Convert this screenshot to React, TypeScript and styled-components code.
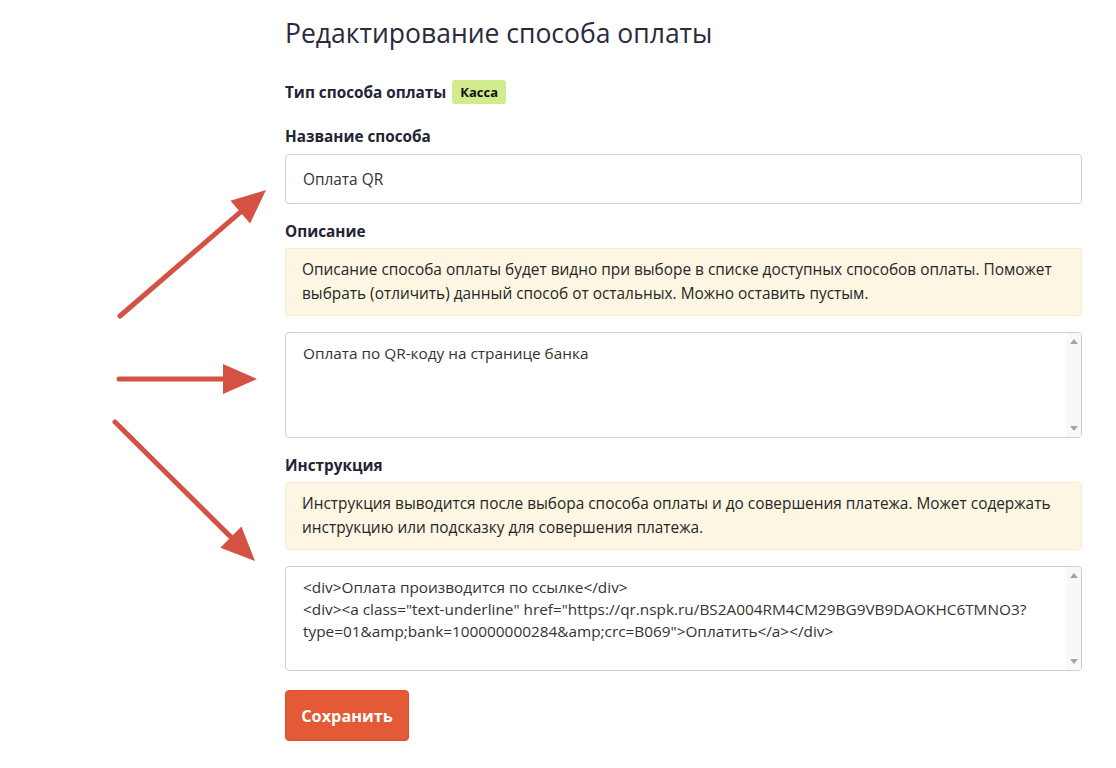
import React from 'react'
import styled, { createGlobalStyle } from 'styled-components'

const GlobalStyle = createGlobalStyle`
  body {
    margin: 0;
    background: #fff;
    font-family: "Open Sans", "Liberation Sans", sans-serif;
    color: #2b2b36;
  }
`

const Page = styled.div`
  position: relative;
  width: 1116px;
  height: 768px;
  overflow: hidden;
`

const Form = styled.div`
  width: 797px;
  margin-left: 285px;
  padding-top: 14px;
  display: flex;
  flex-direction: column;
`

const Title = styled.h1`
  margin: 0 0 28px;
  font-size: 26.5px;
  font-weight: 400;
  line-height: 38px;
  color: #2a2a3c;
`

const Label = styled.div`
  font-size: 15.3px;
  font-weight: 700;
  line-height: 22px;
  color: #232333;
  margin-bottom: 7px;
  display: flex;
  align-items: center;
  gap: 6px;
`

const Badge = styled.span`
  background: #d2eb8c;
  color: #111;
  border-radius: 3px;
  padding: 1px 8px;
  font-size: 13px;
  line-height: 22px;
`

const Field = styled.div<{ $gap?: number }>`
  margin-bottom: ${p => p.$gap ?? 16}px;
`

const Input = styled.input`
  box-sizing: border-box;
  width: 100%;
  height: 50px;
  padding: 0 17px;
  border: 1px solid #cfcfcf;
  border-radius: 4px;
  font-family: inherit;
  font-size: 15.4px;
  color: #333;
  outline: none;
`

const Note = styled.div`
  box-sizing: border-box;
  background: #fcf6e2;
  border: 1px solid #f6ecce;
  border-radius: 3px;
  padding: 9px 16px;
  font-size: 15.4px;
  line-height: 24px;
  color: #262626;
  margin: -1px 0 16px;
`

const AreaWrap = styled.div`
  position: relative;
`

const Area = styled.textarea<{ $h: number }>`
  box-sizing: border-box;
  display: block;
  width: 100%;
  height: ${p => p.$h}px;
  padding: 9px 30px 8px 17px;
  border: 1px solid #cfcfcf;
  border-radius: 4px;
  font-family: inherit;
  font-size: 15.35px;
  line-height: 22px;
  color: #333;
  resize: none;
  overflow: hidden;
  outline: none;
`

const ScrollTrack = styled.div`
  position: absolute;
  top: 1px;
  right: 1px;
  bottom: 1px;
  width: 15px;
  background: #f8f8f8;
  border-radius: 0 3px 3px 0;
  display: flex;
  flex-direction: column;
  justify-content: space-between;
  align-items: center;
  padding: 6px 0;
  box-sizing: border-box;
`

const Tri = styled.span<{ $down?: boolean }>`
  width: 0;
  height: 0;
  border-left: 4px solid transparent;
  border-right: 4px solid transparent;
  ${p => (p.$down ? 'border-top: 5px solid #a3a3a3;' : 'border-bottom: 5px solid #a3a3a3;')}
`

const SaveButton = styled.button`
  align-self: flex-start;
  margin-top: 3px;
  width: 124px;
  height: 51px;
  background: #e55a36;
  border: 1px solid #dd4f2b;
  border-radius: 4px;
  color: #fff;
  font-family: inherit;
  font-size: 16.3px;
  font-weight: 700;
`

const Arrows = styled.svg`
  position: absolute;
  left: 0;
  top: 0;
  pointer-events: none;
`

const Arrow = ({ x1, y1, x2, y2 }: { x1: number; y1: number; x2: number; y2: number }) => {
  const a = Math.atan2(y2 - y1, x2 - x1)
  const len = 34
  const half = 15
  const bx = x2 - Math.cos(a) * len
  const by = y2 - Math.sin(a) * len
  const px = -Math.sin(a) * half
  const py = Math.cos(a) * half
  const sx = x2 - Math.cos(a) * (len - 4)
  const sy = y2 - Math.sin(a) * (len - 4)
  return (
    <g fill="#d35244" stroke="#d35244">
      <line x1={x1} y1={y1} x2={sx} y2={sy} strokeWidth={5} strokeLinecap="round" />
      <polygon points={`${x2},${y2} ${bx + px},${by + py} ${bx - px},${by - py}`} stroke="none" />
    </g>
  )
}

const TextBox = ({ h, value }: { h: number; value: string }) => (
  <AreaWrap>
    <Area $h={h} defaultValue={value} />
    <ScrollTrack>
      <Tri />
      <Tri $down />
    </ScrollTrack>
  </AreaWrap>
)

const description = 'Оплата по QR-коду на странице банка'
const instruction =
  '<div>Оплата производится по ссылке</div>\n<div><a class="text-underline" href="https://qr.nspk.ru/BS2A004RM4CM29BG9VB9DAOKHC6TMNO3?type=01&amp;bank=100000000284&amp;crc=B069">Оплатить</a></div>'

export default function App() {
  return (
    <>
      <GlobalStyle />
      <Page>
        <Form>
          <Title>Редактирование способа оплаты</Title>
          <Field $gap={14}>
            <Label>
              Тип способа оплаты<Badge>Касса</Badge>
            </Label>
          </Field>
          <Field>
            <Label>Название способа</Label>
            <Input defaultValue="Оплата QR" />
          </Field>
          <Field>
            <Label>Описание</Label>
            <Note>
              Описание способа оплаты будет видно при выборе в списке доступных способов оплаты. Поможет выбрать
              (отличить) данный способ от остальных. Можно оставить пустым.
            </Note>
            <TextBox h={106} value={description} />
          </Field>
          <Field>
            <Label>Инструкция</Label>
            <Note>
              Инструкция выводится после выбора способа оплаты и до совершения платежа. Может содержать инструкцию
              или подсказку для совершения платежа.
            </Note>
            <TextBox h={105} value={instruction} />
          </Field>
          <SaveButton>Сохранить</SaveButton>
        </Form>
        <Arrows width={1116} height={768}>
          <Arrow x1={120} y1={316} x2={266} y2={190} />
          <Arrow x1={119} y1={379} x2={257} y2={379} />
          <Arrow x1={115} y1={422} x2={255} y2={561} />
        </Arrows>
      </Page>
    </>
  )
}
